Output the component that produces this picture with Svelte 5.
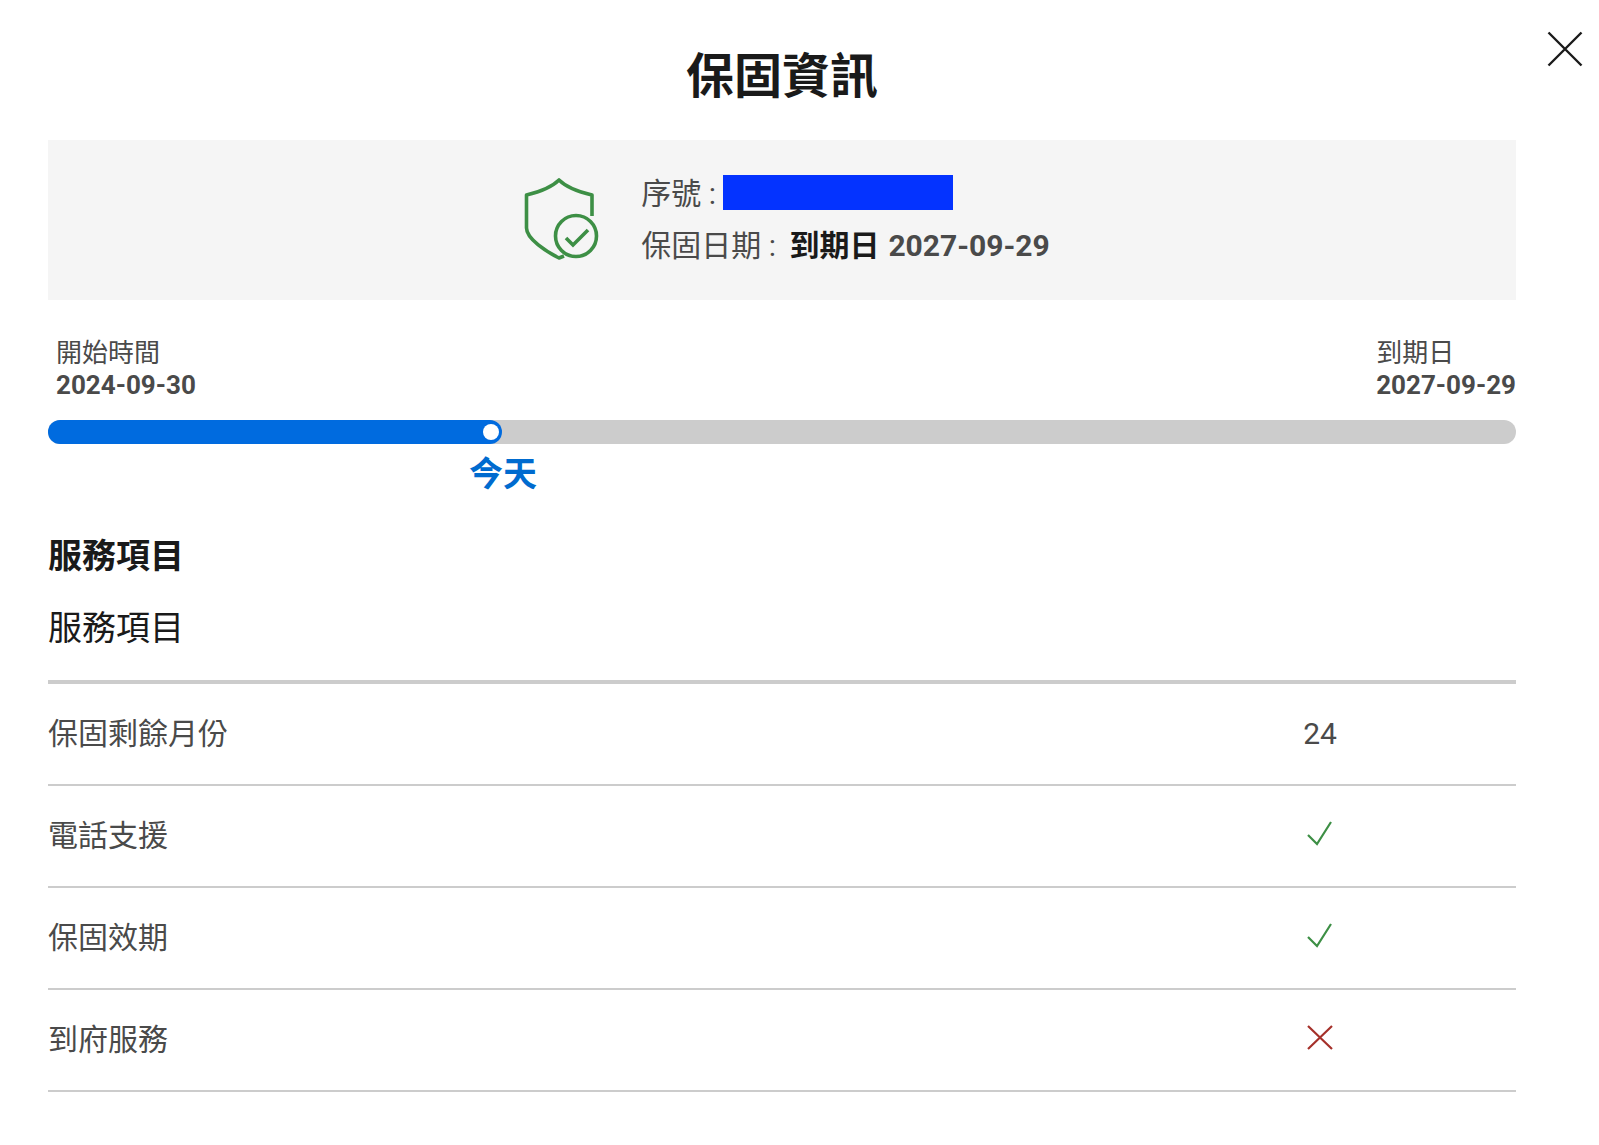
<script>
  const rows = [
    { name: '保固剩餘月份', kind: 'text', value: '24' },
    { name: '電話支援', kind: 'yes' },
    { name: '保固效期', kind: 'yes' },
    { name: '到府服務', kind: 'no' }
  ];
</script>

<div class="page">
  <button class="close" aria-label="關閉">
    <svg width="36" height="36" viewBox="0 0 36 36" fill="none" stroke="#1a1a1a" stroke-width="2.4"><path d="M1.5 1.5 34.5 34.5M34.5 1.5 1.5 34.5"/></svg>
  </button>
  <h1>保固資訊</h1>

  <section class="panel">
    <svg class="shield" width="76" height="84" viewBox="0 0 76 84" fill="none" stroke="#3d8f45" stroke-width="3.6">
      <path d="M41 78 36 80C24 74 3.5 61 3.5 50V17C16 14 29 9 36 2C43 9 56 14 69 17V38" stroke-linejoin="round"/>
      <circle cx="53" cy="58" r="20.5" fill="#f5f5f5"/>
      <path d="M43 60 50 67 65 52"/>
    </svg>
    <div class="info">
      <div class="line">序號 : <span class="mask"></span></div>
      <div class="line">保固日期 : <b class="dark">到期日</b> <b class="date">2027-09-29</b></div>
    </div>
  </section>

  <div class="dates">
    <div><div>開始時間</div><b>2024-09-30</b></div>
    <div><div>到期日</div><b>2027-09-29</b></div>
  </div>

  <div class="track">
    <div class="fill"><span class="dot"></span></div>
  </div>
  <div class="today-row"><span class="today">今天</span></div>

  <h2>服務項目</h2>
  <div class="thead">服務項目</div>

  {#each rows as row}
    <div class="row">
      <div class="name">{row.name}</div>
      <div class="val">
        {#if row.kind === 'text'}
          <span>{row.value}</span>
        {:else if row.kind === 'yes'}
          <svg width="28" height="28" viewBox="0 0 28 28" fill="none" stroke="#3d8f45" stroke-width="2.2"><path d="M2 14 11 23 25 1"/></svg>
        {:else}
          <svg width="28" height="28" viewBox="0 0 28 28" fill="none" stroke="#a5302a" stroke-width="2.2"><path d="M2 1 26 24M26 1 2 24"/></svg>
        {/if}
      </div>
    </div>
  {/each}
</div>

<style>
  :global(body) {
    margin: 0;
    background: #fff;
  }
  .page {
    position: relative;
    width: 1599px;
    height: 1145px;
    box-sizing: border-box;
    padding: 0 83px 0 48px;
    font-family: Roboto, "Noto Sans CJK TC", sans-serif;
    color: #4a4a4a;
    overflow: hidden;
  }
  .close {
    position: absolute;
    top: 31px;
    left: 1547px;
    padding: 0;
    border: 0;
    background: none;
    line-height: 0;
  }
  h1 {
    margin: 0;
    height: 140px;
    line-height: 154px;
    font-size: 48px;
    font-weight: 700;
    color: #1a1a1a;
    text-align: center;
  }
  .panel {
    display: flex;
    align-items: center;
    justify-content: center;
    gap: 42px;
    height: 160px;
    padding-left: 9px;
    background: #f5f5f5;
  }
  .line {
    display: flex;
    align-items: center;
    font-size: 30px;
    line-height: 52px;
    white-space: pre;
  }
  b {
    font-weight: 700;
  }
  .dark {
    color: #1a1a1a;
    margin-left: 6px;
  }
  .date {
    margin-left: 9px;
  }
  .mask {
    display: block;
    width: 230px;
    height: 35px;
    margin-top: -4px;
    background: #0433ff;
  }
  .dates {
    display: flex;
    justify-content: space-between;
    padding: 37px 0 0 8px;
    font-size: 26px;
    line-height: 32px;
  }
  .track {
    height: 24px;
    margin-top: 19px;
    border-radius: 12px;
    background: #cccccc;
  }
  .fill {
    position: relative;
    width: 454px;
    height: 24px;
    border-radius: 12px;
    background: #006bdf;
  }
  .dot {
    position: absolute;
    top: 4px;
    right: 3px;
    width: 16px;
    height: 16px;
    border-radius: 50%;
    background: #fff;
  }
  .today-row {
    height: 60px;
    padding-left: 421px;
  }
  .today {
    font-size: 34px;
    line-height: 60px;
    font-weight: 700;
    color: #006bcf;
  }
  h2 {
    margin: 25px 0 0;
    font-size: 34px;
    line-height: 54px;
    font-weight: 700;
    color: #1a1a1a;
  }
  .thead {
    height: 79px;
    padding-top: 18px;
    font-size: 34px;
    line-height: 54px;
    color: #1a1a1a;
    border-bottom: 4px solid #cccccc;
  }
  .row {
    display: flex;
    align-items: center;
    height: 100px;
    border-bottom: 2px solid #cccccc;
    font-size: 30px;
  }
  .name {
    flex: 1;
    padding-bottom: 7px;
  }
  .val {
    display: flex;
    justify-content: center;
    width: 392px;
    padding-bottom: 2px;
  }
</style>
